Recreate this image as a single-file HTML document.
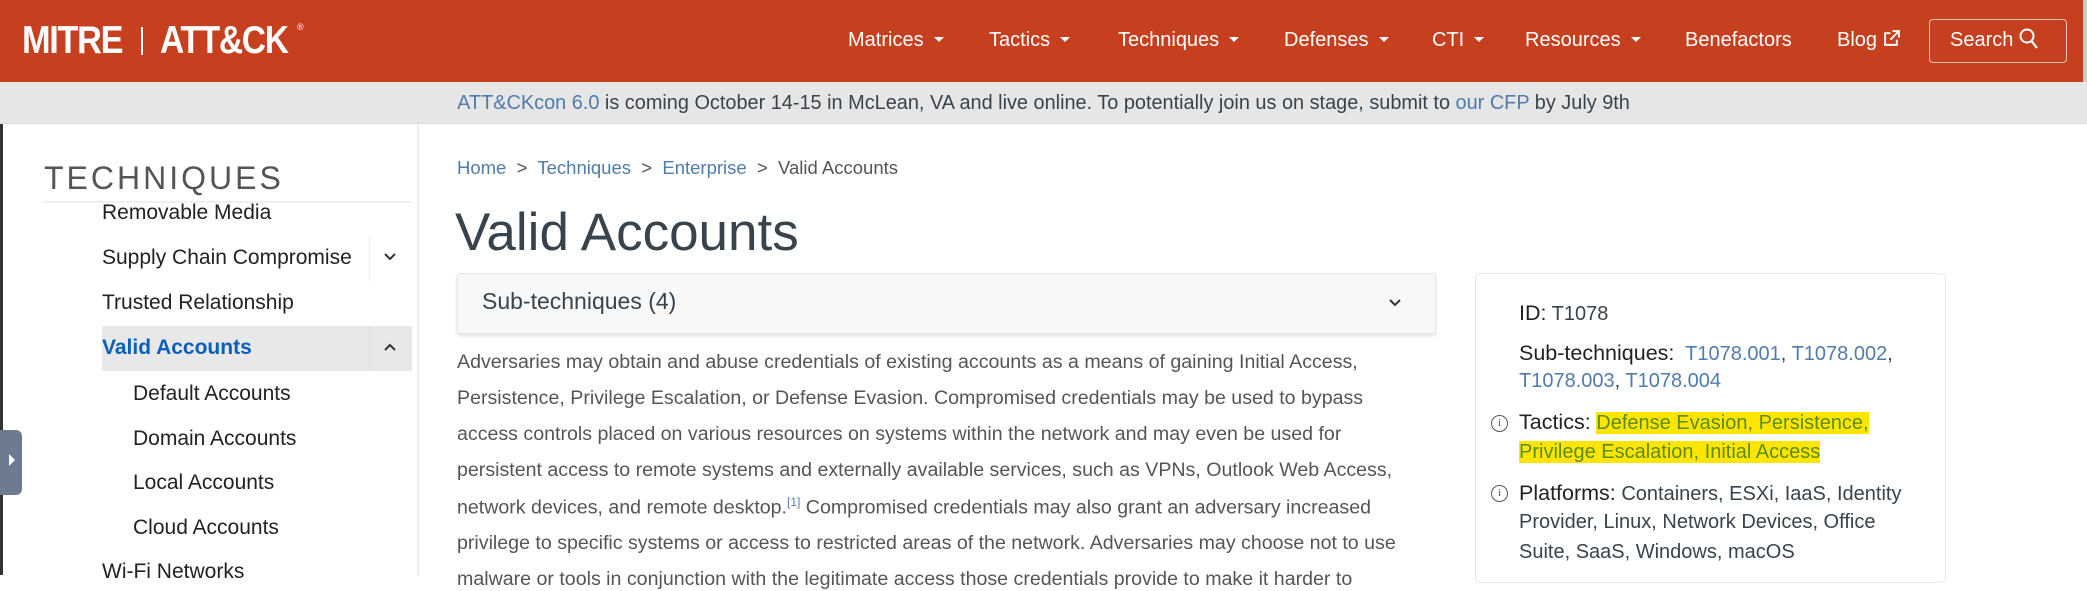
<!DOCTYPE html>
<html><head><meta charset="utf-8"><style>
*{margin:0;padding:0;box-sizing:border-box}
body{width:2087px;height:575px;overflow:hidden;background:#fff;font-family:"Liberation Sans",sans-serif;position:relative;color:#39434c}
.abs{position:absolute;white-space:nowrap}
#nav{position:absolute;left:0;top:0;width:2087px;height:82px;background:#c63f1f}
#nav .it{position:absolute;top:27px;color:#fff;font-size:20px;line-height:26px}
.car{display:inline-block;width:0;height:0;border-left:5px solid transparent;border-right:5px solid transparent;border-top:5px solid #fff;vertical-align:middle;margin-left:10px;margin-top:-3px}
#banner{position:absolute;left:0;top:82px;width:2087px;height:42px;background:#e6e6e6;border-bottom:1px solid #ddd;text-align:center;font-size:19.9px;line-height:42px;color:#39434c}
a{color:#4f7cac;text-decoration:none}
.side{position:absolute;left:102px;font-size:21px;color:#222;line-height:28px}
.sub{left:133px}
.p{position:absolute;left:457px;font-size:19.6px;color:#555;white-space:nowrap}
.c{position:absolute;left:1519px;font-size:20px;color:#39434c;white-space:nowrap}
.lab{font-size:21.5px;color:#222}
.hl{background:#ffe500;color:#5b8c14}
.info{position:absolute;left:1491px;width:17px;height:17px;border:1.5px solid #555;border-radius:50%;font-size:11px;text-align:center;line-height:14px;color:#555;font-family:"Liberation Serif",serif}
</style></head><body>
<div id="nav">
  <div class="abs" style="left:22px;top:21px;color:#fff;font-weight:bold;font-size:39px;letter-spacing:-1.5px;line-height:40px;transform:scaleX(0.88);transform-origin:left">MITRE</div>
  <div class="abs" style="left:141px;top:27px;width:2px;height:28px;background:#fff"></div>
  <div class="abs" style="left:160px;top:21px;color:#fff;font-weight:bold;font-size:39px;letter-spacing:-1.5px;line-height:40px;transform:scaleX(0.86);transform-origin:left">ATT&amp;CK</div>
  <div class="abs" style="left:297px;top:22px;color:#fff;font-size:9px">®</div>
  <div class="it" style="left:848px">Matrices<span class="car"></span></div>
  <div class="it" style="left:989px">Tactics<span class="car"></span></div>
  <div class="it" style="left:1118px">Techniques<span class="car"></span></div>
  <div class="it" style="left:1284px">Defenses<span class="car"></span></div>
  <div class="it" style="left:1432px">CTI<span class="car"></span></div>
  <div class="it" style="left:1525px">Resources<span class="car"></span></div>
  <div class="it" style="left:1685px">Benefactors</div>
  <div class="it" style="left:1837px">Blog <svg width="17" height="17" viewBox="0 0 16 16" style="vertical-align:-1px"><path d="M7 3H2v11h11V9" fill="none" stroke="#fff" stroke-width="1.8"/><path d="M9 1h6v6M15 1L7 9" fill="none" stroke="#fff" stroke-width="1.8"/></svg></div>
  <div class="abs" style="left:1929px;top:19px;width:138px;height:44px;border:1.5px solid #f0c0b0;border-radius:4px;color:#fff;font-size:20px;line-height:40px;padding-left:20px">Search <svg width="20" height="22" viewBox="0 0 20 22" style="vertical-align:-4px"><circle cx="8" cy="8" r="6.5" fill="none" stroke="#fff" stroke-width="2"/><path d="M12.5 13l5.5 7" stroke="#fff" stroke-width="2.2"/></svg></div>
</div>
<div class="abs" style="left:2083px;top:0;width:4px;height:124px;background:#ccc"></div>
<div id="banner"><a>ATT&amp;CKcon 6.0</a> is coming October 14-15 in McLean, VA and live online. To potentially join us on stage, submit to <a>our CFP</a> by July 9th</div>
<div class="abs" style="left:0;top:124px;width:3px;height:451px;background:#333"></div>
<div class="abs" style="left:417px;top:124px;width:2px;height:451px;background:#eee"></div>
<div class="abs" style="left:44px;top:158px;font-size:32px;letter-spacing:3px;color:#555;line-height:40px">TECHNIQUES</div>
<div class="abs" style="left:42px;top:201px;width:370px;height:2px;background:#f0f0f0"></div>
<div class="side" style="top:199px">Removable Media</div>
<div class="side" style="top:244px">Supply Chain Compromise</div>
<div class="abs" style="left:369px;top:236px;width:1px;height:45px;background:#eee"></div>
<svg class="abs" style="left:383px;top:252px" width="14" height="10" viewBox="0 0 14 10"><path d="M2 2l5 5 5-5" fill="none" stroke="#333" stroke-width="2"/></svg>
<div class="side" style="top:289px">Trusted Relationship</div>
<div class="abs" style="left:102px;top:326px;width:310px;height:45px;background:#e8e8e8"></div>
<div class="abs" style="left:369px;top:326px;width:1px;height:45px;background:#ddd"></div>
<div class="side" style="top:334px;color:#0b5fbd;font-weight:bold">Valid Accounts</div>
<svg class="abs" style="left:383px;top:342px" width="14" height="10" viewBox="0 0 14 10"><path d="M2 8l5-5 5 5" fill="none" stroke="#333" stroke-width="2"/></svg>
<div class="side sub" style="top:380px">Default Accounts</div>
<div class="side sub" style="top:425px">Domain Accounts</div>
<div class="side sub" style="top:469px">Local Accounts</div>
<div class="side sub" style="top:514px">Cloud Accounts</div>
<div class="side" style="top:558px">Wi-Fi Networks</div>
<div class="abs" style="left:0;top:430px;width:22px;height:65px;background:#6d7a90;border-radius:0 6px 6px 0"></div>
<div class="abs" style="left:9px;top:454px;width:0;height:0;border-top:6px solid transparent;border-bottom:6px solid transparent;border-left:6px solid #fff"></div>

<div class="abs" style="left:457px;top:157px;font-size:18.5px;color:#555"><a>Home</a> &nbsp;&gt;&nbsp; <a>Techniques</a> &nbsp;&gt;&nbsp; <a>Enterprise</a> &nbsp;&gt;&nbsp; Valid Accounts</div>
<div class="abs" style="left:455px;top:202px;font-size:53px;color:#39434c;line-height:62px">Valid Accounts</div>
<div class="abs" style="left:457px;top:273px;width:979px;height:61px;background:#f8f8f8;border:1px solid #e5e5e5;border-radius:3px;box-shadow:0 2px 3px rgba(0,0,0,0.12)"></div>
<div class="abs" style="left:482px;top:288px;font-size:23px;color:#39434c">Sub-techniques (4)</div>
<svg class="abs" style="left:1388px;top:298px" width="14" height="10" viewBox="0 0 14 10"><path d="M2 2l5 5 5-5" fill="none" stroke="#333" stroke-width="2"/></svg>

<div class="p" style="top:351px">Adversaries may obtain and abuse credentials of existing accounts as a means of gaining Initial Access,</div>
<div class="p" style="top:387px">Persistence, Privilege Escalation, or Defense Evasion. Compromised credentials may be used to bypass</div>
<div class="p" style="top:423px">access controls placed on various resources on systems within the network and may even be used for</div>
<div class="p" style="top:459px">persistent access to remote systems and externally available services, such as VPNs, Outlook Web Access,</div>
<div class="p" style="top:495px">network devices, and remote desktop.<sup style="font-size:12px;color:#4f7cac">[1]</sup> Compromised credentials may also grant an adversary increased</div>
<div class="p" style="top:532px">privilege to specific systems or access to restricted areas of the network. Adversaries may choose not to use</div>
<div class="p" style="top:568px">malware or tools in conjunction with the legitimate access those credentials provide to make it harder to</div>

<div class="abs" style="left:1475px;top:273px;width:471px;height:310px;border:1.5px solid #e8e8e8;border-radius:4px"></div>
<div class="c" style="top:301px"><span class="lab">ID:</span> T1078</div>
<div class="c" style="top:341px"><span class="lab">Sub-techniques:</span>&nbsp; <a>T1078.001</a>, <a>T1078.002</a>,</div>
<div class="c" style="top:370px"><a>T1078.003</a>, <a>T1078.004</a></div>
<div class="info" style="top:415px">i</div>
<div class="c" style="top:410px"><span class="lab">Tactics:</span> <span class="hl">Defense Evasion, Persistence,</span></div>
<div class="c" style="top:441px"><span class="hl">Privilege Escalation, Initial Access</span></div>
<div class="info" style="top:485px">i</div>
<div class="c" style="top:481px"><span class="lab">Platforms:</span> Containers, ESXi, IaaS, Identity</div>
<div class="c" style="top:511px">Provider, Linux, Network Devices, Office</div>
<div class="c" style="top:541px">Suite, SaaS, Windows, macOS</div>
</body></html>
